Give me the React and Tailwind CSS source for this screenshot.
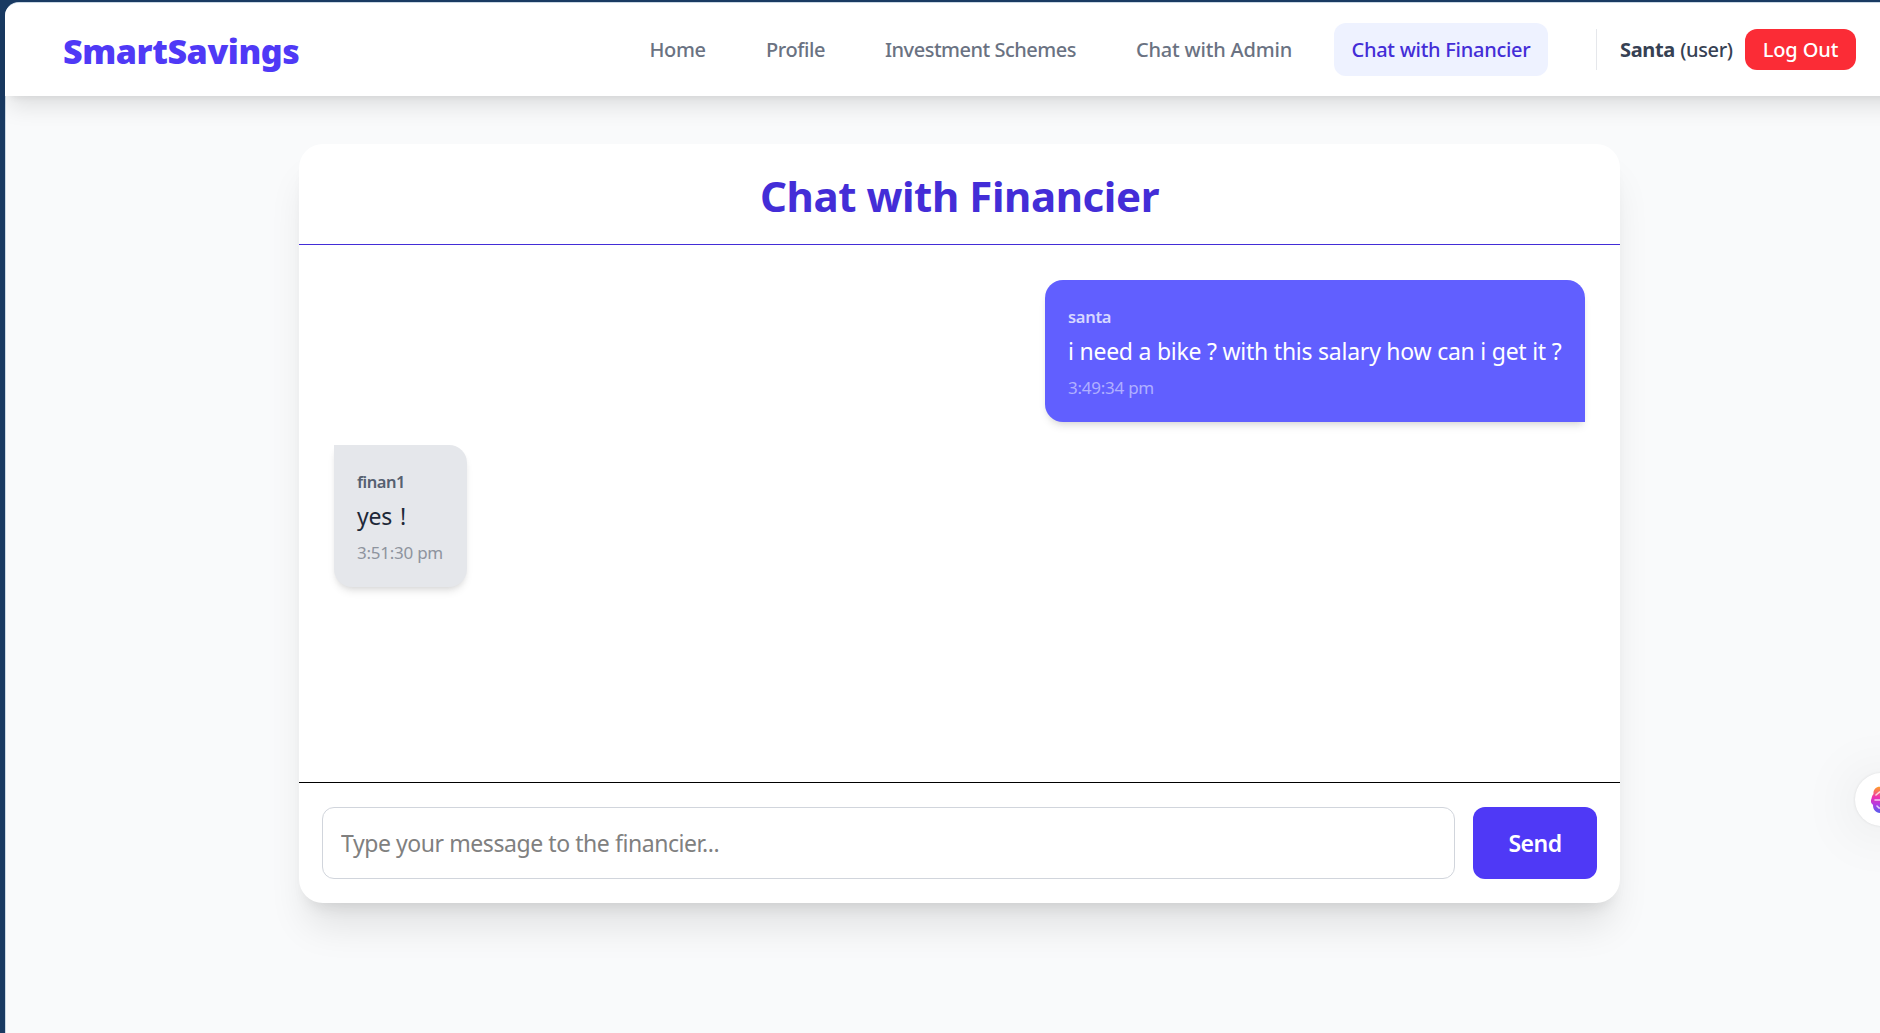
const links = [
  { label: "Home", box: "w-[93px]", tracking: "tracking-[-0.4px]" },
  { label: "Profile", box: "w-[95px]", tracking: "tracking-[-0.4px]" },
  { label: "Investment Schemes", box: "w-[227px]", tracking: "tracking-[-0.49px]" },
  { label: "Chat with Admin", box: "w-[192px]", tracking: "tracking-[-0.18px]" },
  { label: "Chat with Financier", box: "w-[214px]", tracking: "tracking-[-0.27px]", active: true },
];

function Header() {
  return (
    <header className="relative z-10 -mr-[40px] flex h-[93px] shrink-0 items-center rounded-tl-[13px] bg-white pr-[64px] shadow-[0_15px_22px_-4px_rgba(0,0,0,0.1),0_6px_9px_-6px_rgba(0,0,0,0.1)]">
      <div className="ml-[58px] pt-[3px] text-[34px] leading-[48px] font-black tracking-[-0.4px] text-indigo-600">
        SmartSavings
      </div>
      <nav className="ml-auto flex gap-[24px]">
        {links.map((l) => (
          <a
            key={l.label}
            className={`flex h-[53px] items-center justify-center rounded-[12px] text-[20px] font-medium whitespace-nowrap ${l.box} ${l.tracking} ${
              l.active ? "bg-indigo-50 text-indigo-700" : "text-gray-500"
            }`}
          >
            {l.label}
          </a>
        ))}
      </nav>
      <div className="ml-[48px] flex h-[41px] items-center border-l border-gray-200 pl-[23px]">
        <div className="w-[125px] text-[20px] font-medium whitespace-nowrap text-gray-700">
          <span className="font-bold tracking-[-0.35px]">Santa</span>{" "}
          <span className="tracking-[-0.35px]">(user)</span>
        </div>
        <button className="h-[41px] w-[111px] rounded-[12px] bg-[#fb2c36] text-[20px] font-medium tracking-[-0.1px] text-white">
          Log Out
        </button>
      </div>
    </header>
  );
}

function Message({ name, text, time, mine }) {
  return (
    <div
      className={`flex h-[142px] flex-col px-[23px] pt-[22px] whitespace-nowrap shadow-[0_6px_9px_-2px_rgba(0,0,0,0.1),0_3px_6px_-3px_rgba(0,0,0,0.1)] ${
        mine
          ? "w-[540px] self-end rounded-[18px] rounded-br-none bg-[#615fff] text-white"
          : "w-[133px] self-start rounded-[18px] rounded-tl-none bg-gray-200 text-gray-800"
      }`}
    >
      <div
        className={`pt-px text-[16.5px] leading-[27px] font-semibold ${
          mine ? "tracking-[-0.3px] text-white/75" : "tracking-[-0.5px] text-[#566070]"
        }`}
      >
        {name}
      </div>
      <div
        className={`mt-[3px] text-[23px] leading-[36px] ${mine ? "tracking-[-0.24px]" : "tracking-[-0.2px] [word-spacing:2px]"}`}
      >
        {text}
      </div>
      <div
        className={`mt-[7px] text-[17px] leading-[24px] tracking-[-0.25px] ${
          mine ? "text-white/50" : "text-[#8e949e]"
        }`}
      >
        {time}
      </div>
    </div>
  );
}

function ChatCard() {
  return (
    <section className="mt-[48px] ml-[294px] flex h-[759px] w-[1321px] flex-col rounded-[24px] bg-white shadow-[0_30px_38px_-8px_rgba(0,0,0,0.1),0_12px_15px_-9px_rgba(0,0,0,0.1)]">
      <h1 className="flex h-[101px] items-center justify-center border-b border-indigo-700 pt-[3px] text-[42px] font-bold tracking-[-0.42px] text-indigo-700">
        Chat with Financier
      </h1>
      <div className="flex flex-1 flex-col gap-[23px] px-[35px] pt-[35px]">
        <Message
          mine
          name="santa"
          text="i need a bike ? with this salary how can i get it ?"
          time="3:49:34 pm"
        />
        <Message name="finan1" text="yes !" time="3:51:30 pm" />
      </div>
      <div className="flex h-[121px] gap-[18px] border-t border-black px-[23px] pt-[24px]">
        <input
          className="h-[72px] min-w-0 flex-1 rounded-[12px] border border-gray-300 px-[18px] text-[23px] tracking-[-0.43px] placeholder:text-[#808080]"
          placeholder="Type your message to the financier..."
        />
        <button className="h-[72px] w-[124px] rounded-[12px] bg-indigo-600 text-[23px] font-semibold tracking-[-0.5px] text-white">
          Send
        </button>
      </div>
    </section>
  );
}

function AssistantBubble() {
  return (
    <div className="absolute top-[773px] left-[1855px] flex size-[53px] items-center justify-center rounded-full bg-white shadow-[0_4px_60px_rgba(0,0,0,0.1),0_0_3px_rgba(0,0,0,0.1)]">
      <svg width="22" height="28" viewBox="0 0 22 28" fill="none">
        <defs>
          <linearGradient id="brain" x1="0" y1="0" x2="0" y2="28" gradientUnits="userSpaceOnUse">
            <stop offset="0.05" stopColor="#ff9a2e" />
            <stop offset="0.4" stopColor="#ee2fb0" />
            <stop offset="0.65" stopColor="#b43be0" />
            <stop offset="1" stopColor="#4a62f0" />
          </linearGradient>
        </defs>
        <path
          d="M10 1C6 0 2 3 2.500 8C0.500 10 1 12 0 14C-0.500 17 1 18 2 19C2 24 5 27 10 27H22V1Z"
          fill="url(#brain)"
        />
        <path
          d="M5 9L8 6.500L10 5.500M4 14H11M6 20L8 22H10"
          stroke="#fff"
          strokeOpacity="0.75"
          strokeWidth="1.600"
          strokeLinecap="round"
        />
      </svg>
    </div>
  );
}

export default function App() {
  return (
    <div className="relative h-[1033px] w-[1880px] overflow-hidden bg-[#193a62] pt-[2px] pl-[5px] font-['Noto_Sans','Segoe_UI',sans-serif]">
      <div className="flex h-full flex-col rounded-tl-[14px] border-t border-l border-[#cbd8e4] bg-gray-50">
        <div className="-ml-px flex flex-1 flex-col">
          <Header />
          <ChatCard />
        </div>
      </div>
      <AssistantBubble />
    </div>
  );
}
